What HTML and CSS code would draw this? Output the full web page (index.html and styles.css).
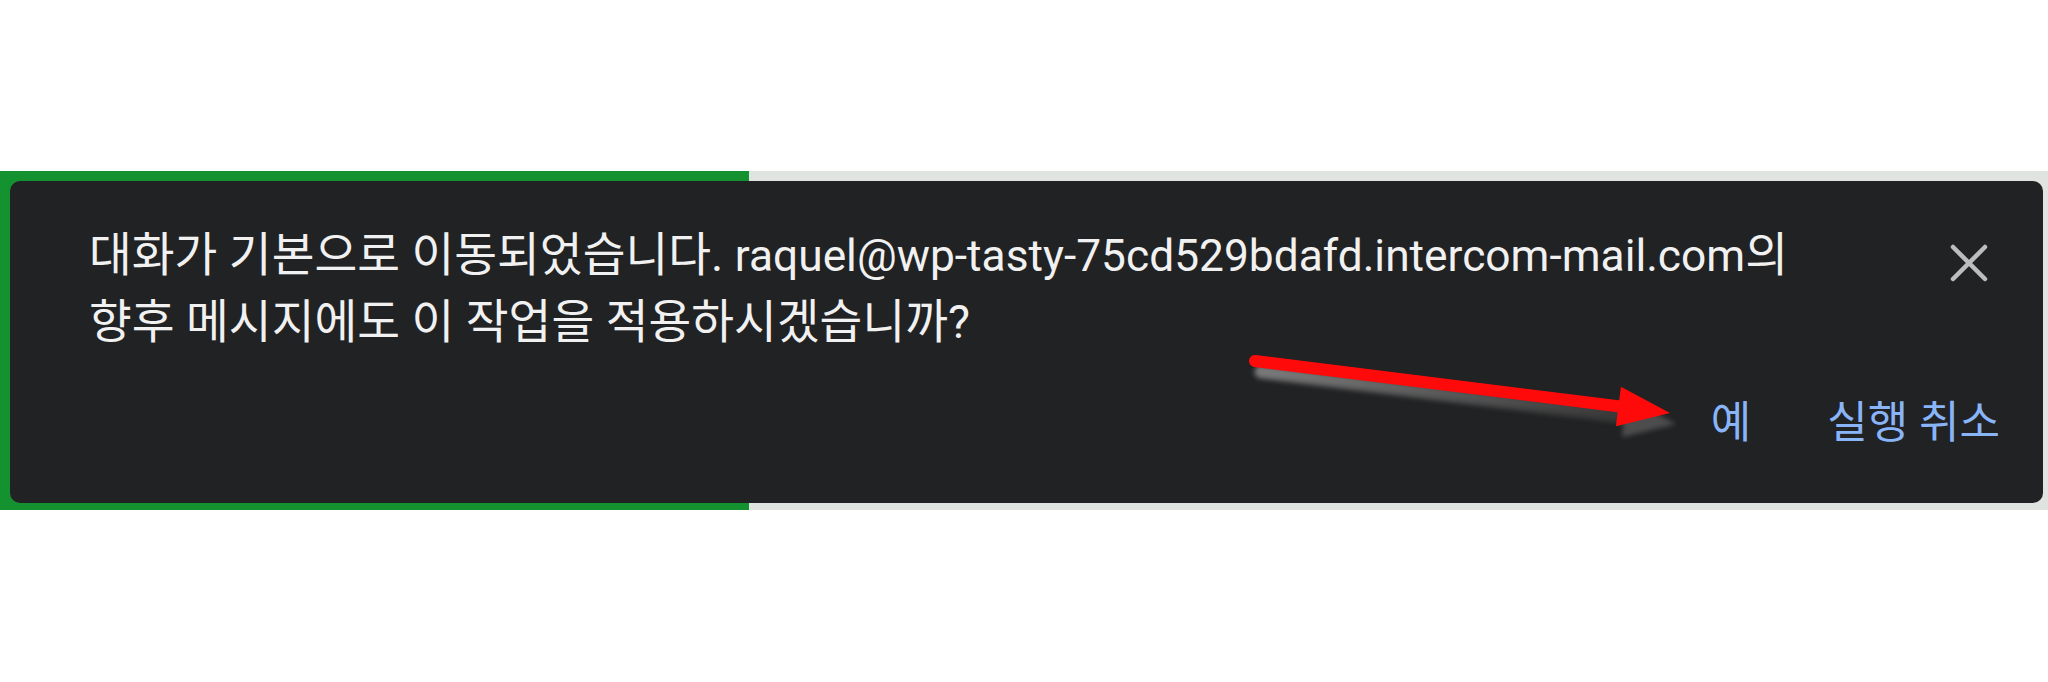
FILE: index.html
```html
<!DOCTYPE html>
<html lang="ko">
<head>
    <meta charset="UTF-8">
    <meta name="viewport" content="width=device-width, initial-scale=1.0">
    <title>스낵바</title>
    <link rel="stylesheet" href="styles.css">
</head>
<body>
    <div class="strip">
        <div class="snackbar">
            <div class="snackbar_top">
                <p class="snackbar_text">대화가 기본으로 이동되었습니다. <span class="snackbar_email">raquel@wp-tasty-75cd529bdafd.intercom-mail.com</span>의<br>향후 메시지에도 이 작업을 적용하시겠습니까?</p>
                <button class="snackbar_close" aria-label="닫기">
                    <svg width="38" height="38" viewBox="0 0 38 38">
                        <path d="M3 3 L35 35 M35 3 L3 35" stroke="#bdbdbd" stroke-width="4.5" stroke-linecap="round"/>
                    </svg>
                </button>
            </div>
            <div class="snackbar_actions">
                <button class="snackbar_btn">예</button>
                <button class="snackbar_btn">실행 취소</button>
            </div>

            <!-- red annotation arrow drawn over the snackbar -->
            <svg class="arrow" width="2033" height="322" viewBox="0 0 2033 322">
                <defs>
                    <linearGradient id="shade" x1="0" y1="0" x2="0" y2="1">
                        <stop offset="0" stop-color="#8a8a8a"/>
                        <stop offset="1" stop-color="#3a3a3a"/>
                    </linearGradient>
                    <filter id="soft" x="-5%" y="-50%" width="110%" height="200%">
                        <feGaussianBlur stdDeviation="2.5"/>
                    </filter>
                </defs>
                <g transform="translate(6 11)" filter="url(#soft)" opacity="0.85">
                    <line x1="1245" y1="180" x2="1610" y2="225.5" stroke="url(#shade)" stroke-width="13" stroke-linecap="round"/>
                    <polygon points="1610.9,205.7 1660,232 1605.9,245.3" fill="#555"/>
                </g>
                <line x1="1245" y1="180" x2="1612" y2="225.8" stroke="#ff0a0a" stroke-width="12" stroke-linecap="round"/>
                <polygon points="1610.9,205.7 1660,232 1605.9,245.3" fill="#ff0a0a"/>
            </svg>
        </div>
    </div>
</body>
</html>
```

FILE: styles.css
```css
body {
    margin: 0;
    padding: 0;
    background-color: #ffffff;
    font-family: Roboto, "Noto Sans CJK KR", sans-serif;
}

.strip {
    margin-top: 171px;
    padding: 10px 5px 7px 10px;
    background: linear-gradient(to right, #14922f 0, #14922f 749px, #dfe4e0 749px);
}

.snackbar {
    position: relative;
    height: 322px;
    box-sizing: border-box;
    display: flex;
    flex-direction: column;
    justify-content: space-between;
    padding: 41px 43px 50px 79px;
    background-color: #212224;
    border-radius: 10px;
}

.snackbar_top {
    display: flex;
    justify-content: space-between;
    align-items: flex-start;
}

.snackbar_text {
    margin: 0;
    color: #f1f1f1;
    font-size: 46.5px;
    line-height: 66px;
}

/* latin part of the message runs a little narrower than the hangul */
.snackbar_email {
    font-size: 44.3px;
}

.snackbar_close {
    margin: 22px 12px 0 0;
    padding: 0;
    border: none;
    background: none;
    width: 38px;
    height: 38px;
}

.snackbar_actions {
    display: flex;
    justify-content: flex-end;
    gap: 76px;
}

.snackbar_btn {
    padding: 0;
    border: none;
    background: none;
    color: #8ab4f8;
    font-family: Roboto, "Noto Sans CJK KR", sans-serif;
    font-size: 44px;
    line-height: 60px;
}

.arrow {
    position: absolute;
    left: 0;
    top: 0;
    pointer-events: none;
}
```
